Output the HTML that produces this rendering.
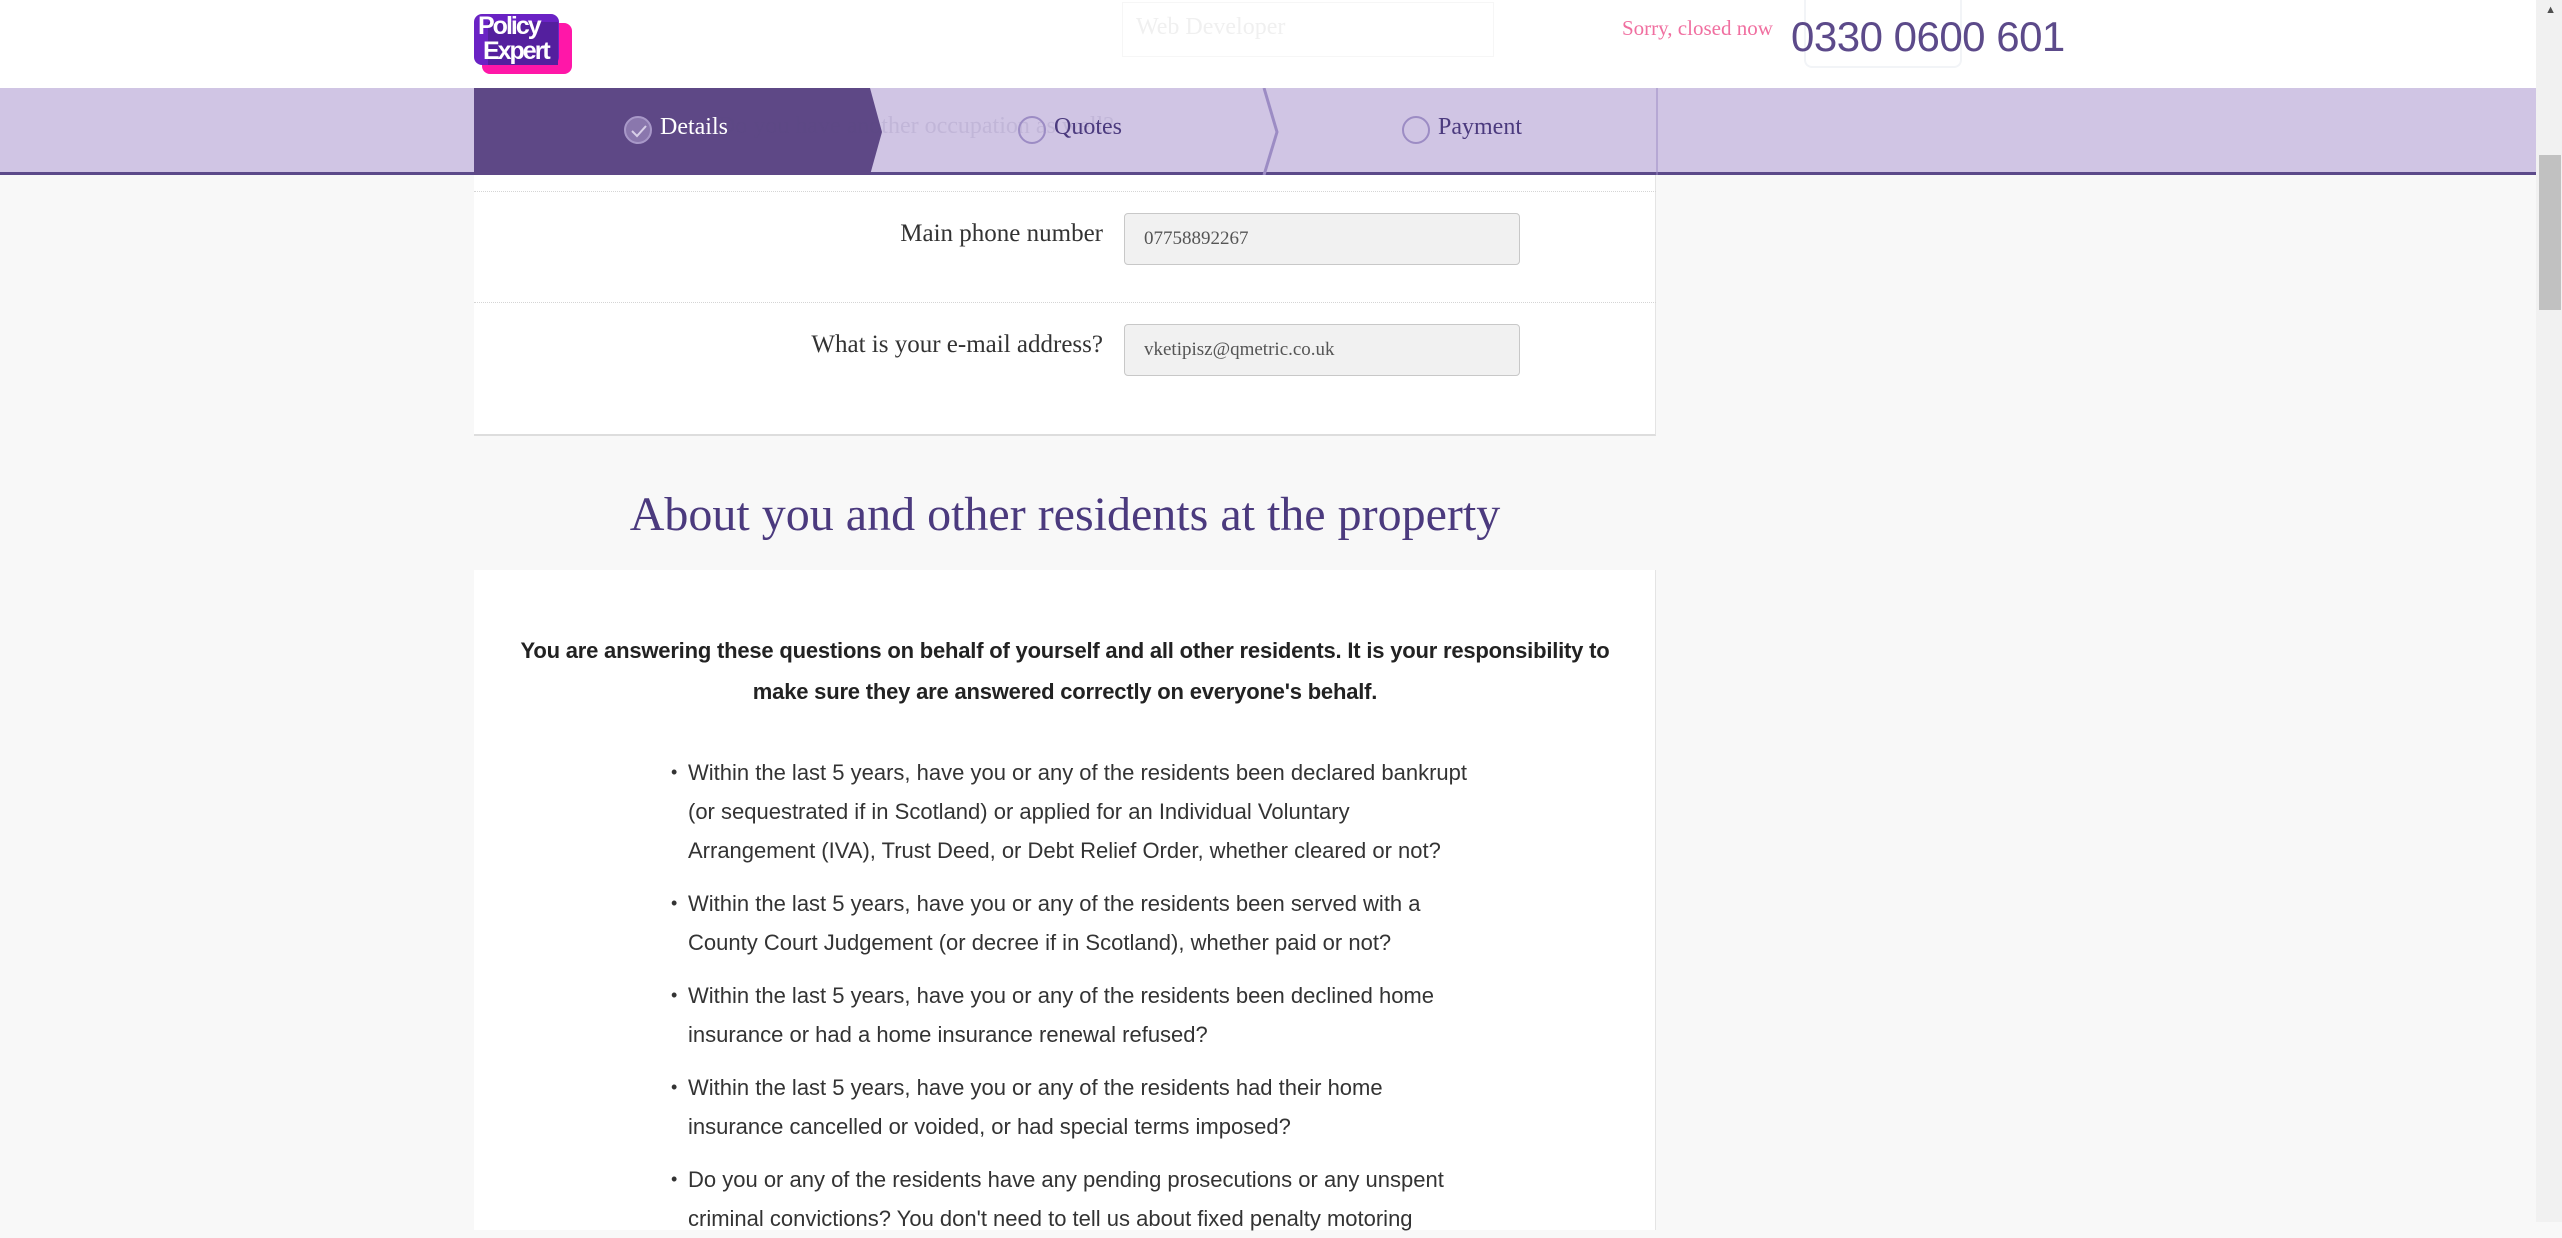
<!DOCTYPE html>
<html><head><meta charset="utf-8"><style>
*{margin:0;padding:0;box-sizing:border-box}
html,body{width:2562px;height:1222px;overflow:hidden;background:#f8f8f8;font-family:"Liberation Sans",sans-serif}
.hdr{position:absolute;left:0;top:0;width:2536px;height:88px;background:#fff}
.nav{position:absolute;left:0;top:88px;width:2536px;height:87px;background:#d0c5e4;border-bottom:3px solid #5c4a8a}
.sb{position:absolute;right:0;top:0;width:26px;height:1222px;background:#f1f1f1}
.thumb{position:absolute;right:1px;top:155px;width:22px;height:155px;background:#c1c1c1}
.abs{position:absolute;white-space:nowrap}
.serif{font-family:"Liberation Serif",serif}
.card{position:absolute;left:474px;width:1182px;background:#fff}
.sep{position:absolute;left:0;width:1182px;border-top:1px dotted #d5d5d5}
.lbl{position:absolute;right:0;text-align:right;font-family:"Liberation Serif",serif;font-size:25px;color:#333}
.inp{position:absolute;left:1124px;width:396px;height:52px;background:#f1f1f1;border:1px solid #c8c8c8;border-radius:4px;font-family:"Liberation Serif",serif;font-size:19px;color:#555;padding:0 0 0 19px;line-height:50px}
.circ{position:absolute;width:28px;height:28px;border-radius:50%;border:2px solid #9c8cc4;top:116px}
.navt{position:absolute;top:114px;font-family:"Liberation Serif",serif;font-size:24px;color:#4b3a7e}
ul{list-style:none}
li{position:absolute;left:688px;font-size:22px;color:#333;line-height:39px;white-space:nowrap}
li:before{content:"•";position:absolute;left:-17px;font-size:18px}
</style></head><body>
<div class="hdr"></div>
<div class="abs" style="left:1122px;top:2px;width:372px;height:55px;border:1px solid #f6f6f6"></div>
<div class="abs serif" style="left:1136px;top:14px;font-size:24px;color:#f0f0f0">Web Developer</div>
<div class="abs" style="left:1804px;top:0;width:158px;height:68px;border:2px solid #f2f4f7;border-top:none;border-radius:0 0 8px 8px"></div>
<!-- logo -->
<div class="abs" style="left:482px;top:23px;width:90px;height:51px;background:#ff17a8;border-radius:8px"></div>
<div class="abs" style="left:474px;top:14px;width:85px;height:51px;background:#6a22c4;border-radius:8px"></div>
<div class="abs" style="left:488px;top:22px;width:70px;height:43px;background:#541f9e"></div>
<div class="abs" style="left:478px;top:14px;font-size:25px;line-height:25px;color:#fff;font-weight:bold;letter-spacing:-2px">Policy<br>&nbsp;Expert</div>
<div class="abs serif" style="left:1622px;top:16px;font-size:21px;color:#f06fa0">Sorry, closed now</div>
<div class="abs" style="left:1791px;top:13px;font-size:42px;color:#5c4a8a;letter-spacing:-0.5px">0330 0600 601</div>

<div class="nav"></div>
<svg class="abs" style="left:474px;top:88px" width="1184" height="87">
<polygon points="0,0 396,0 408,44 396,87 0,87" fill="#5e4886"/>
<polyline points="790,0 803,44 790,87" fill="none" stroke="#9c8cc4" stroke-width="3"/>
<line x1="1183" y1="0" x2="1183" y2="87" stroke="#9c8cc4" stroke-width="1"/>
</svg>
<div class="abs serif" style="left:718px;top:113px;font-size:24px;color:rgba(90,70,130,.12)">Do you have another occupation as well?</div>
<div class="circ" style="left:624px;background:#8a77ad;border-color:#a898c8"></div>
<svg class="abs" style="left:631px;top:124px" width="16" height="14"><polyline points="1,7 6,12 15,2" fill="none" stroke="#d8cfe8" stroke-width="2"/></svg>
<div class="navt" style="left:660px;color:#fff">Details</div>
<div class="circ" style="left:1018px"></div>
<div class="navt" style="left:1054px">Quotes</div>
<div class="circ" style="left:1402px"></div>
<div class="navt" style="left:1438px">Payment</div>

<div class="card" style="top:175px;height:261px;border-bottom:2px solid #ddd;border-right:1px solid #e4e4e4">
<div class="sep" style="top:16px"></div>
<div class="sep" style="top:127px"></div>
</div>
<div class="lbl" style="right:1459px;top:220px">Main phone number</div>
<div class="inp" style="top:213px">07758892267</div>
<div class="lbl" style="right:1459px;top:331px">What is your e-mail address?</div>
<div class="inp" style="top:324px">vketipisz@qmetric.co.uk</div>

<div class="abs serif" style="left:474px;width:1182px;text-align:center;top:487px;font-size:48px;color:#4b3a7e">About you and other residents at the property</div>

<div class="card" style="top:570px;height:660px;border-right:1px solid #e4e4e4"></div>
<div class="abs" style="left:474px;width:1182px;text-align:center;top:630px;font-size:22px;line-height:41px;font-weight:bold;color:#222;letter-spacing:-0.2px">You are answering these questions on behalf of yourself and all other residents. It is your responsibility to<br>make sure they are answered correctly on everyone's behalf.</div>
<ul>
<li style="top:753px">Within the last 5 years, have you or any of the residents been declared bankrupt<br>(or sequestrated if in Scotland) or applied for an Individual Voluntary<br>Arrangement (IVA), Trust Deed, or Debt Relief Order, whether cleared or not?</li>
<li style="top:884px">Within the last 5 years, have you or any of the residents been served with a<br>County Court Judgement (or decree if in Scotland), whether paid or not?</li>
<li style="top:976px">Within the last 5 years, have you or any of the residents been declined home<br>insurance or had a home insurance renewal refused?</li>
<li style="top:1068px">Within the last 5 years, have you or any of the residents had their home<br>insurance cancelled or voided, or had special terms imposed?</li>
<li style="top:1160px">Do you or any of the residents have any pending prosecutions or any unspent<br>criminal convictions? You don't need to tell us about fixed penalty motoring</li>
</ul>
<div class="sb"><div class="thumb"></div></div>
<div class="abs" style="right:6px;top:4px;font-size:11px;color:#505050">▲</div>
</body></html>
